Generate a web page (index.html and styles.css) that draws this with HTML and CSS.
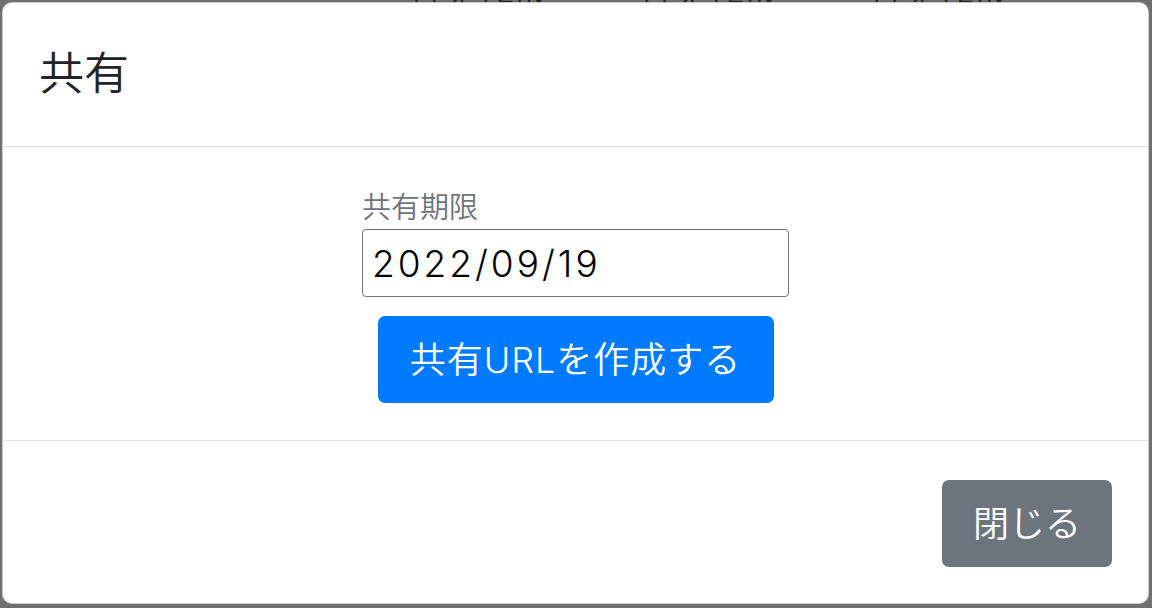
FILE: index.html
```html
<!DOCTYPE html>
<html lang="ja">
<head>
    <meta charset="UTF-8">
    <meta name="viewport" content="width=device-width, initial-scale=1.0">
    <title>共有</title>
    <link rel="stylesheet" href="styles.css">
</head>
<body>
    <div class="backdrop-text">共有を作成 共有を作成 共有を作成</div>
    <div class="modal">
        <div class="modal-header">
            <h5 class="modal-title">共有</h5>
        </div>
        <div class="modal-body">
            <div class="form-group">
                <label class="form-label" for="expire">共有期限</label>
                <input class="form-input" id="expire" type="text" value="2022/09/19">
            </div>
            <button class="btn btn-primary">共有URLを作成する</button>
        </div>
        <div class="modal-footer">
            <button class="btn btn-secondary">閉じる</button>
        </div>
    </div>
</body>
</html>
```

FILE: styles.css
```css
body {
    margin: 0;
    padding: 2px 3px 4px 2px;
    height: 608px;
    box-sizing: border-box;
    background: #707070;
    font-family: Inter, 'Noto Sans CJK JP', sans-serif;
    font-weight: 350;
    overflow: hidden;
    position: relative;
}

.backdrop-text {
    position: absolute;
    top: -33px;
    left: 370px;
    font-size: 36px;
    color: #222;
    word-spacing: 40px;
    white-space: nowrap;
}

.modal {
    position: relative;
    height: 100%;
    box-sizing: border-box;
    background: #fff;
    border: 1px solid rgba(0, 0, 0, 0.2);
    border-radius: 10px;
    display: flex;
    flex-direction: column;
}

.modal-header {
    padding: 44px 36px 45px;
    border-bottom: 1px solid #dee2e6;
}

.modal-title {
    margin: 0;
    font-size: 45px;
    line-height: 54px;
    font-weight: 350;
    color: #212529;
}

.modal-body {
    padding: 39px 0 37px;
    display: flex;
    flex-direction: column;
    align-items: center;
    gap: 19px;
}

.form-group {
    width: 427px;
    display: flex;
    flex-direction: column;
}

.form-label {
    font-size: 29px;
    line-height: 43px;
    color: #6c757d;
}

.form-input {
    height: 68px;
    box-sizing: border-box;
    margin: 0;
    padding: 0 9px;
    border: 1px solid #767676;
    border-radius: 4px;
    font-family: Inter, 'Noto Sans CJK JP', sans-serif;
    font-weight: 350;
    font-size: 37px;
    letter-spacing: 3px;
    color: #000;
    background: #fff;
}

.btn {
    border: none;
    border-radius: 7px;
    height: 87px;
    padding: 0;
    font-family: Inter, 'Noto Sans CJK JP', sans-serif;
    font-weight: 350;
    font-size: 36px;
    line-height: 54px;
    color: #fff;
    cursor: pointer;
}

.btn-primary {
    background: #007bff;
    width: 396px;
    letter-spacing: 1px;
}

.btn-secondary {
    background: #6c757d;
    width: 170px;
}

.modal-footer {
    margin-top: auto;
    padding: 39px 36px 36px;
    border-top: 1px solid #dee2e6;
    display: flex;
    justify-content: flex-end;
}
```
